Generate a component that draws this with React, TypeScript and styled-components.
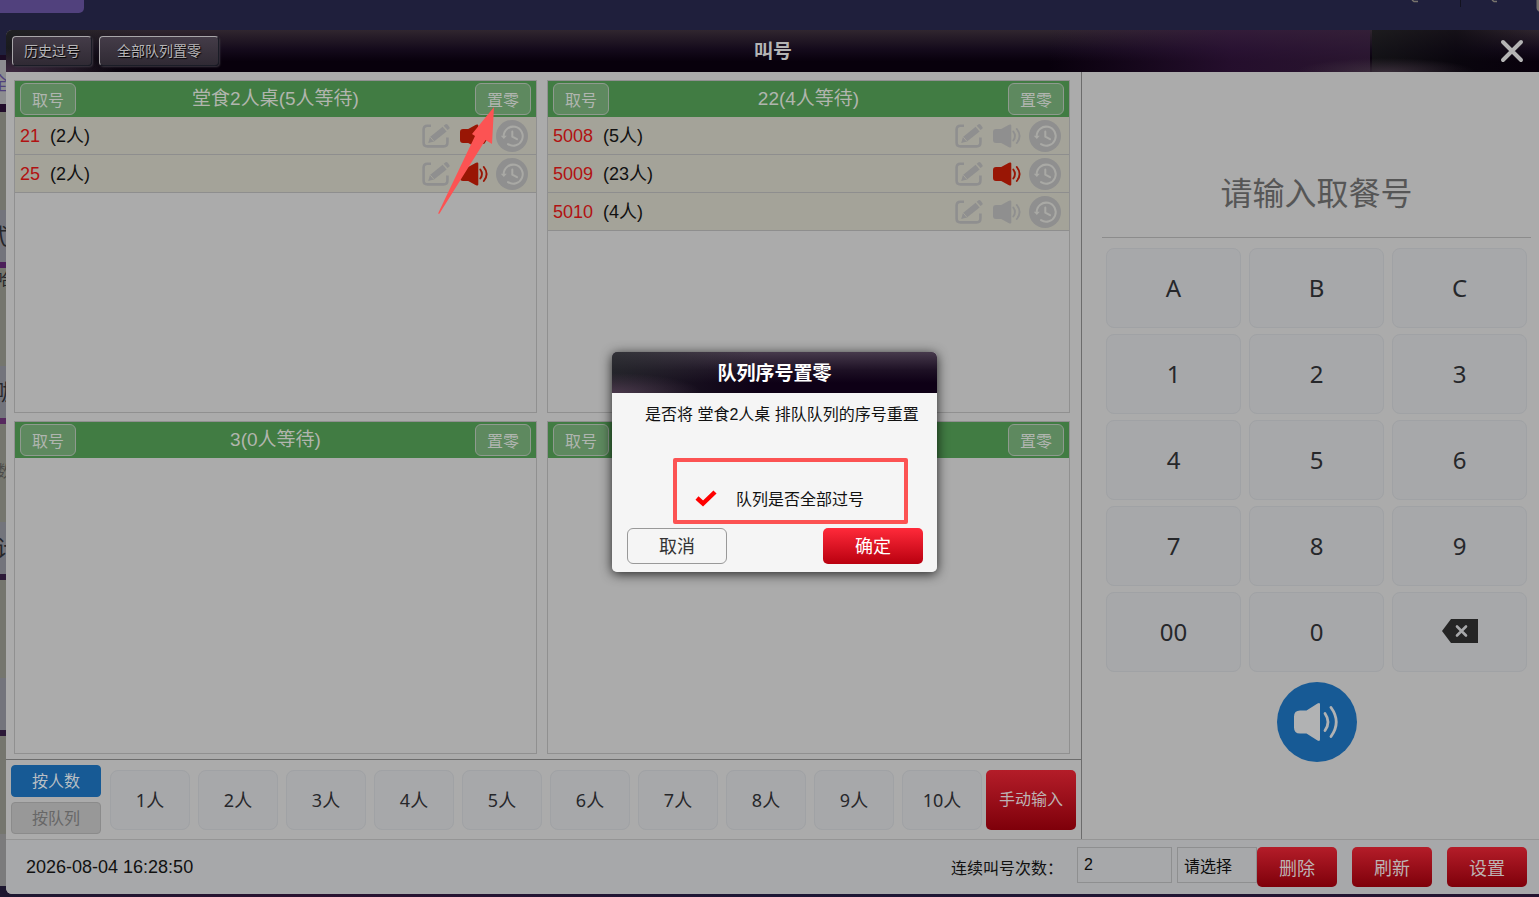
import React, { useState } from 'react';
import styled, { createGlobalStyle, css } from 'styled-components';

const GlobalStyle = createGlobalStyle`
  * { box-sizing: border-box; }
  body {
    margin: 0;
    background: #1f1f3c;
    font-family: "Liberation Sans", "Noto Sans CJK SC", sans-serif;
    color: #111;
  }
  button, input, select { font-family: inherit; margin: 0; padding: 0; }
  button { cursor: pointer; }
`;

const redButton = css`
  border: 0;
  border-radius: 5px;
  color: #bdb3b4;
  background: linear-gradient(#b41d29, #7e000a);
`;

/* ---------- page behind the window ---------- */

const Screen = styled.div`
  position: relative;
  min-height: 100vh;
  padding: 30px 0 3px 6px;
  overflow: hidden;
  display: flex;
`;

const Backdrop = styled.div`
  position: absolute;
  inset: 0;
  overflow: hidden;
  display: flex;
  flex-direction: column;
  background: #1f1f3c;
`;

const BackTop = styled.div`
  height: 55px;
  flex: none;
  display: flex;
  justify-content: space-between;
`;

const BackTab = styled.div`
  width: 84px;
  height: 13px;
  border-radius: 0 0 5px 0;
  background: #51417d;
`;

const BackGlyphs = styled.svg`
  display: block;
  width: 139px;
  height: 13px;
`;

const BackSearch = styled.div`
  flex: none;
  height: 57px;
  border-top: 5px solid #1b0b24;
  border-bottom: 8px solid #210c2a;
  background: #8d8d90;
  color: #51417d;
  font-size: 18px;
  line-height: 48px;
  text-indent: -9px;
`;

const BackCard = styled.div<{ $line: string }>`
  flex: none;
  height: 156px;
  border-bottom: 6px solid ${(p) => p.$line};
  background: linear-gradient(#75766e 98px, #73747c 98px);
  display: flex;
  flex-direction: column;
  justify-content: space-between;
  color: #26262a;
`;

const BackNote = styled.span<{ $muted?: boolean }>`
  padding-top: ${(p) => (p.$muted ? 36 : 0)}px;
  color: ${(p) => (p.$muted ? '#4c4c4a' : 'inherit')};
  font-size: 16px;
  line-height: 24px;
  text-indent: -4px;
`;

const BackName = styled.span<{ $shift: number }>`
  font-size: 22px;
  line-height: 50px;
  text-indent: -${(p) => p.$shift}px;
`;

const BackFoot = styled.div`
  flex: none;
  height: 150px;
  border-bottom: 52px solid #7b7b7c;
  background: #75766e;
`;

const BackBase = styled.div`
  flex: 1;
  background: linear-gradient(90deg, #1d1730, #2a1230 20%, #1d1735 50%, #241430);
`;

/* ---------- window ---------- */

const Window = styled.main`
  position: relative;
  flex: 1;
  min-width: 0;
  display: flex;
  flex-direction: column;
  border-radius: 6px 0 0 6px;
  overflow: hidden;
  background: #ababab;
`;

const TitleBar = styled.header`
  height: 42px;
  flex: none;
  display: grid;
  grid-template-columns: 1fr auto 1fr;
  align-items: center;
  padding: 0 5px 0 6px;
  background:
    radial-gradient(ellipse 90px 14px at 90% 100%, rgba(66, 52, 66, 0.8), transparent),
    linear-gradient(90deg, transparent 1366px, rgba(22, 24, 24, 0.75) 1366px, rgba(10, 8, 14, 0.7) 1450px, transparent),
    linear-gradient(90deg, transparent 68%, rgba(52, 22, 62, 0.65) 80%, rgba(52, 28, 58, 0.75) 89%, transparent 89%),
    radial-gradient(ellipse 110px 24px at 0 100%, rgba(66, 42, 68, 0.9), transparent),
    linear-gradient(90deg, rgba(26, 30, 30, 0.8), transparent 140px),
    linear-gradient(#30262f, #150b1c 45%, #08000c 75%, #08000c);
`;

const TitleActions = styled.div`
  display: flex;
  gap: 7px;
`;

const TitleButton = styled.button<{ $wide?: boolean }>`
  width: ${(p) => (p.$wide ? 120 : 80)}px;
  height: 30px;
  border: 1px solid;
  border-color: #a9a7aa #1a1c26 #1a1c26 #a9a7aa;
  border-radius: 4px;
  box-shadow: 1px 1px 2px #3b3640;
  background: linear-gradient(#443c48, #302a34);
  color: #b6b4b6;
  font-size: 14px;
  line-height: 20px;
  text-shadow: 1px 1px 1px #000;
`;

const Title = styled.h1`
  margin: 0;
  padding-top: 2px;
  color: #b4b4b4;
  font-size: 19px;
  line-height: 28px;
  font-weight: 700;
`;

const CloseButton = styled.button`
  justify-self: end;
  width: 44px;
  height: 42px;
  display: grid;
  place-items: center;
  border: 0;
  background: none;
`;

const Body = styled.div`
  flex: 1;
  display: flex;
  min-height: 0;
`;

const QueueSide = styled.section`
  flex: 1;
  min-width: 0;
  display: flex;
  flex-direction: column;
  border-right: 1px solid #6c6c6c;
`;

const QueueGrid = styled.div`
  flex: 1;
  display: grid;
  grid-template-columns: 1fr 1fr;
  grid-template-rows: 1fr 1fr;
  gap: 8px 10px;
  padding: 8px 11px 5px 8px;
`;

const Queue = styled.article`
  position: relative;
  border: 1px solid #909090;
`;

const QueueHead = styled.div`
  height: 36px;
  padding: 0 5px;
  display: flex;
  align-items: center;
  justify-content: space-between;
  background: #417c43;
`;

const QueueTitle = styled.h2`
  margin: 0;
  color: #b1b5ae;
  font-size: 19px;
  line-height: 34px;
  font-weight: 400;
`;

const HeadButton = styled.button`
  width: 56px;
  height: 32px;
  padding-top: 3px;
  border: 1px solid #8f9a8f;
  border-radius: 6px;
  background: #5e895f;
  color: #b0b5b0;
  font-size: 16px;
  line-height: 24px;
`;

const TicketList = styled.ul`
  list-style: none;
  margin: 0;
  padding: 0;
`;

const Ticket = styled.li`
  height: 38px;
  padding: 0 8px 0 5px;
  display: flex;
  align-items: center;
  gap: 10px;
  border-bottom: 1px solid #8e8e8e;
  background: #a4a399;
  font-size: 18px;
  line-height: 36px;
`;

const TicketNumber = styled.span`
  color: #b11212;
`;

const TicketTools = styled.div`
  margin-left: auto;
  display: flex;
  align-items: center;
  gap: 8px;
`;

const IconButton = styled.button`
  display: block;
  border: 0;
  background: none;
  line-height: 0;
`;

const Arrow = styled.svg`
  position: absolute;
  z-index: 1;
  left: 422px;
  top: 24px;
  width: 60px;
  height: 112px;
  pointer-events: none;
`;

/* ---------- party size bar ---------- */

const PartyBar = styled.div`
  height: 80px;
  flex: none;
  display: flex;
  align-items: center;
  padding: 0 5px;
  border-top: 1px solid #6c6c6c;
`;

const ModeGroup = styled.div`
  display: flex;
  flex-direction: column;
  gap: 5px;
  margin-right: 9px;
`;

const ModeButton = styled.button<{ $active?: boolean }>`
  width: 90px;
  height: 32px;
  padding-top: 2px;
  border: 1px solid ${(p) => (p.$active ? '#175a95' : '#8b8b8b')};
  border-radius: 4px;
  background: ${(p) => (p.$active ? '#175a95' : '#989898')};
  color: ${(p) => (p.$active ? '#b9bfc4' : '#676767')};
  font-size: 16px;
  line-height: 24px;
`;

const PartyList = styled.div`
  flex: 1;
  display: flex;
  justify-content: space-between;
  gap: 8px;
  margin-right: 4px;
`;

const softKey = css`
  border: 1px solid #a0a2a5;
  background: #a7a8aa;
  color: #26272a;
  font-family: "Noto Sans", "Noto Sans CJK SC", sans-serif;
`;

const PartyButton = styled.button`
  ${softKey}
  flex: 1;
  height: 60px;
  padding-bottom: 2px;
  border-radius: 8px;
  font-size: 18px;
`;

const ManualButton = styled.button`
  ${redButton}
  width: 90px;
  height: 60px;
  padding-bottom: 3px;
  font-size: 16px;
`;

/* ---------- keypad ---------- */

const PadSide = styled.section`
  flex: 0 0 457px;
  padding: 72px 8px 0 20px;
`;

const PadInput = styled.input`
  display: block;
  width: 100%;
  height: 94px;
  padding-top: 8px;
  border: 0;
  border-bottom: 1px solid #8c8c8c;
  background: none;
  text-align: center;
  font-size: 32px;
  color: #222;
  outline: none;
  &::placeholder { color: #565656; opacity: 1; }
`;

const PadGrid = styled.div`
  display: grid;
  grid-template-columns: repeat(3, 1fr);
  gap: 6px 8px;
  padding: 10px 4px;
`;

const PadKey = styled.button`
  ${softKey}
  height: 80px;
  padding-bottom: 2px;
  border-radius: 8px;
  font-size: 24px;
  display: grid;
  place-items: center;
`;

const CallButton = styled.button`
  display: grid;
  place-items: center;
  width: 80px;
  height: 80px;
  margin: 0 auto;
  border: 0;
  border-radius: 50%;
  background: #175a95;
`;

/* ---------- footer ---------- */

const Footer = styled.footer`
  flex: none;
  height: 55px;
  display: flex;
  align-items: center;
  padding: 0 12px 0 20px;
  border-top: 1px solid #959595;
  background: #a7a8aa;
`;

const Clock = styled.time`
  margin-right: auto;
  font-size: 18px;
  line-height: 24px;
`;

const CountLabel = styled.label`
  margin-right: 14px;
  padding-top: 4px;
  font-size: 16px;
  line-height: 24px;
`;

const fieldBox = css`
  height: 36px;
  margin-bottom: 4px;
  padding-left: 6px;
  border: 1px solid #8e8f90;
  border-radius: 0;
  background: none;
  color: #0c0c0c;
  font-size: 16px;
  outline: none;
`;

const CountInput = styled.input`
  ${fieldBox}
  width: 95px;
  margin-right: 5px;
`;

const PickSelect = styled.select`
  ${fieldBox}
  width: 80px;
  padding-top: 2px;
  appearance: none;
`;

const FooterActions = styled.div`
  display: flex;
  gap: 15px;
`;

const FooterButton = styled.button`
  ${redButton}
  width: 80px;
  height: 40px;
  font-size: 18px;
`;

/* ---------- dialog ---------- */

const DialogLayer = styled.div`
  position: absolute;
  z-index: 2;
  inset: 0;
  padding-left: 4px;
  display: grid;
  place-items: center;
`;

const Dialog = styled.div`
  position: relative;
  width: 325px;
  height: 220px;
  display: flex;
  flex-direction: column;
  border-radius: 5px;
  overflow: hidden;
  background: #f5f5f5;
`;

const DialogShadow = styled.div`
  border-radius: 5px;
  box-shadow: 0 2px 12px rgba(0, 0, 0, 0.8);
`;

const DialogTitle = styled.h2`
  margin: 0;
  height: 41px;
  padding-top: 2px;
  color: #fff;
  font-size: 19px;
  line-height: 40px;
  font-weight: 700;
  text-align: center;
  background:
    radial-gradient(ellipse 90px 20px at 0 100%, rgba(84, 62, 84, 0.8), transparent),
    linear-gradient(90deg, rgba(40, 46, 46, 0.7), transparent 45%),
    linear-gradient(#473a4c, #1d1024 45%, #0e0016 75%);
`;

const DialogText = styled.p`
  margin: 0;
  padding: 10px 19px 0 33px;
  font-size: 16px;
  line-height: 24px;
  white-space: nowrap;
  color: #111;
`;

const CheckLabel = styled.label`
  display: flex;
  align-items: center;
  gap: 19px;
  margin-top: auto;
  padding-left: 83px;
  font-size: 16px;
  line-height: 24px;
  color: #111;
`;

const CheckMark = styled.span`
  position: relative;
  display: block;
  width: 22px;
  height: 24px;
`;

const CheckInput = styled.input`
  position: absolute;
  inset: 0;
  width: 22px;
  height: 24px;
  opacity: 0;
`;

const CheckSvg = styled.svg<{ $on: boolean }>`
  display: block;
  visibility: ${(p) => (p.$on ? 'visible' : 'hidden')};
`;

const DialogActions = styled.div`
  display: flex;
  justify-content: space-between;
  padding: 16px 14px 8px 15px;
`;

const CancelButton = styled.button`
  width: 100px;
  height: 36px;
  padding-bottom: 2px;
  border: 1px solid #999;
  border-radius: 6px;
  background: #f5f5f5;
  color: #333;
  font-size: 18px;
`;

const ConfirmButton = styled.button`
  ${redButton}
  width: 100px;
  height: 36px;
  padding-bottom: 2px;
  color: #fff;
  background: linear-gradient(#ff2a3a, #b9000f);
  font-size: 18px;
`;

const Highlight = styled.div`
  position: absolute;
  left: 61px;
  top: 106px;
  width: 235px;
  height: 66px;
  border: 4px solid #fc5353;
  border-radius: 2px;
  pointer-events: none;
`;

/* ---------- icons ---------- */

const EditIcon = () => (
  <svg width="30" height="26" viewBox="0 0 30 26" fill="none">
    <path d="M9 2.800H5.500Q1.600 2.800 1.600 6.700V19.500Q1.600 23.400 5.500 23.400H21.500Q25.400 23.400 25.400 19.500V14.500" stroke="#8f8f8f" strokeWidth="2.600" />
    <path d="M6.200 20l1.800-6L20.600 3.700l4 4.700L12 18.400z" fill="#8f8f8f" />
    <path d="M21.700 2.800L23.600 1.300Q24.600.6 25.500 1.600L27.400 3.900Q28.100 4.900 27.200 5.700L25.600 7z" fill="#8f8f8f" />
    <path d="M8.300 14.100l3.500 4.100" stroke="#a4a399" strokeWidth="1" />
  </svg>
);

const SpeakerIcon = ({ color }: { color: string }) => (
  <svg width="28" height="24" viewBox="0 0 28 24" fill="none">
    <path d="M3 5H8.200L16 .8Q18.300-.2 18.300 1.600V22.400Q18.300 24.200 16 23.200L8.200 19H3Q0 19 0 16V8Q0 5 3 5Z" fill={color} />
    <path d="M20.300 7.500Q23.600 12 20.300 16.500" stroke={color} strokeWidth="1.900" strokeLinecap="round" />
    <path d="M23.800 5Q29.400 12 23.800 19" stroke={color} strokeWidth="1.900" strokeLinecap="round" />
  </svg>
);

const CallIcon = () => (
  <svg width="46" height="40" viewBox="0 0 46 40" fill="none">
    <path d="M6 8.500H12.500L23.500 1.400Q26 .2 26 2.400V37.600Q26 39.800 23.500 38.600L12.500 31.500H6Q0 31.500 0 25.500V14.500Q0 8.500 6 8.500Z" fill="#b1b2b3" />
    <path d="M31 11.500Q37 20 31 28.500" stroke="#b1b2b3" strokeWidth="2.800" strokeLinecap="round" />
    <path d="M37 5.500Q47.500 20 37 34.500" stroke="#b1b2b3" strokeWidth="2.800" strokeLinecap="round" />
  </svg>
);

const HistoryIcon = () => (
  <svg width="32" height="32" viewBox="0 0 32 32" fill="none">
    <circle cx="16" cy="16" r="16" fill="#8f8f8f" />
    <path d="M7.700 16A9.500 9.500 0 1 1 12 24.100" stroke="#a9a9a5" strokeWidth="2" strokeLinecap="round" />
    <path d="M4.800 15.700h6L7.800 19z" fill="#a9a9a5" />
    <path d="M16.300 11.500V16.700L21 19.200" stroke="#a9a9a5" strokeWidth="2" strokeLinecap="round" />
  </svg>
);

const BackspaceIcon = () => (
  <svg width="36" height="24" viewBox="0 0 36 24">
    <path d="M0 12L9 0H36V24H9z" fill="#252525" />
    <path d="M15 7.500l9 9M24 7.500l-9 9" stroke="#a7a8aa" strokeWidth="2.600" strokeLinecap="round" />
  </svg>
);

/* ---------- data ---------- */

type Entry = { no: string; people: string; called: boolean };
type QueueData = { title: string; entries: Entry[]; arrow?: boolean };

const queues: QueueData[] = [
  {
    title: '堂食2人桌(5人等待)',
    arrow: true,
    entries: [
      { no: '21', people: '(2人)', called: true },
      { no: '25', people: '(2人)', called: true },
    ],
  },
  {
    title: '22(4人等待)',
    entries: [
      { no: '5008', people: '(5人)', called: false },
      { no: '5009', people: '(23人)', called: true },
      { no: '5010', people: '(4人)', called: false },
    ],
  },
  { title: '3(0人等待)', entries: [] },
  { title: '4(0人等待)', entries: [] },
];

const keys = ['A', 'B', 'C', '1', '2', '3', '4', '5', '6', '7', '8', '9', '00', '0'];
const cards = [
  { note: '', name: '式', shift: 13, line: '#4c1f5a' },
  { note: '哈', name: '咖', shift: 4, line: '#57295f' },
  { note: '数', name: '计', shift: 4, line: '#2c1a38', muted: true },
  { note: '', name: '', shift: 0, line: '#2c1a38' },
];

const QueuePanel = ({ data }: { data: QueueData }) => (
  <Queue>
    <QueueHead>
      <HeadButton>取号</HeadButton>
      <QueueTitle>{data.title}</QueueTitle>
      <HeadButton>置零</HeadButton>
    </QueueHead>
    <TicketList>
      {data.entries.map((e) => (
        <Ticket key={e.no}>
          <TicketNumber>{e.no}</TicketNumber>
          <span>{e.people}</span>
          <TicketTools>
            <IconButton aria-label="编辑"><EditIcon /></IconButton>
            <IconButton aria-label="叫号"><SpeakerIcon color={e.called ? '#991605' : '#8f8f8f'} /></IconButton>
            <IconButton aria-label="过号"><HistoryIcon /></IconButton>
          </TicketTools>
        </Ticket>
      ))}
    </TicketList>
    {data.arrow && (
      <Arrow viewBox="0 0 60 112">
        <path d="M57 2L55 39L48.500 35L2.500 108.500Q1 110 1.500 107.500L38 31L35 29Z" fill="#fc5353" />
      </Arrow>
    )}
  </Queue>
);

export default function App() {
  const [passAll, setPassAll] = useState(true);
  return (
    <>
      <GlobalStyle />
      <Screen>
        <Backdrop aria-hidden="true">
          <BackTop>
            <BackTab />
            <BackGlyphs viewBox="0 0 139 13">
              <path d="M12 0l2 1.500h4M92 0l2 1.500h3" stroke="#77736c" strokeWidth="1.500" fill="none" />
              <path d="M60.500 0v7" stroke="#12121f" />
              <path d="M136.500 0v8q0 3 3 4V0z" fill="#77736c" />
            </BackGlyphs>
          </BackTop>
          <BackSearch>全</BackSearch>
          {cards.map((c, i) => (
            <BackCard key={i} $line={c.line}>
              <BackNote $muted={c.muted}>{c.note}</BackNote>
              <BackName $shift={c.shift}>{c.name}</BackName>
            </BackCard>
          ))}
          <BackFoot />
          <BackBase />
        </Backdrop>

        <Window>
          <TitleBar>
            <TitleActions>
              <TitleButton>历史过号</TitleButton>
              <TitleButton $wide>全部队列置零</TitleButton>
            </TitleActions>
            <Title>叫号</Title>
            <CloseButton aria-label="关闭">
              <svg width="24" height="24" viewBox="0 0 24 24">
                <path d="M3 3l18 18M21 3L3 21" stroke="#b4b4b4" strokeWidth="4" strokeLinecap="round" />
              </svg>
            </CloseButton>
          </TitleBar>

          <Body>
            <QueueSide>
              <QueueGrid>
                {queues.map((q) => <QueuePanel key={q.title} data={q} />)}
              </QueueGrid>
              <PartyBar>
                <ModeGroup>
                  <ModeButton $active>按人数</ModeButton>
                  <ModeButton>按队列</ModeButton>
                </ModeGroup>
                <PartyList>
                  {Array.from({ length: 10 }, (_, i) => (
                    <PartyButton key={i}>{`${i + 1}人`}</PartyButton>
                  ))}
                </PartyList>
                <ManualButton>手动输入</ManualButton>
              </PartyBar>
            </QueueSide>

            <PadSide>
              <PadInput aria-label="取餐号" placeholder="请输入取餐号" />
              <PadGrid>
                {keys.map((k) => <PadKey key={k}>{k}</PadKey>)}
                <PadKey aria-label="退格"><BackspaceIcon /></PadKey>
              </PadGrid>
              <CallButton aria-label="呼叫"><CallIcon /></CallButton>
            </PadSide>
          </Body>

          <Footer>
            <Clock>2026-08-04 16:28:50</Clock>
            <CountLabel htmlFor="count">连续叫号次数：</CountLabel>
            <CountInput id="count" defaultValue="2" />
            <PickSelect aria-label="请选择"><option>请选择</option></PickSelect>
            <FooterActions>
              <FooterButton>删除</FooterButton>
              <FooterButton>刷新</FooterButton>
              <FooterButton>设置</FooterButton>
            </FooterActions>
          </Footer>

          <DialogLayer>
            <DialogShadow>
              <Dialog role="dialog" aria-labelledby="dialog-title">
                <DialogTitle id="dialog-title">队列序号置零</DialogTitle>
                <DialogText>是否将 堂食2人桌 排队队列的序号重置</DialogText>
                <CheckLabel>
                  <CheckMark>
                    <CheckInput type="checkbox" checked={passAll} onChange={(e) => setPassAll(e.target.checked)} />
                    <CheckSvg $on={passAll} width="22" height="24" viewBox="0 0 22 24">
                      <path d="M2 10L8 15.500L20 4" stroke="#fe0000" strokeWidth="4.500" fill="none" />
                    </CheckSvg>
                  </CheckMark>
                  队列是否全部过号
                </CheckLabel>
                <DialogActions>
                  <CancelButton>取消</CancelButton>
                  <ConfirmButton>确定</ConfirmButton>
                </DialogActions>
                <Highlight />
              </Dialog>
            </DialogShadow>
          </DialogLayer>
        </Window>
      </Screen>
    </>
  );
}
